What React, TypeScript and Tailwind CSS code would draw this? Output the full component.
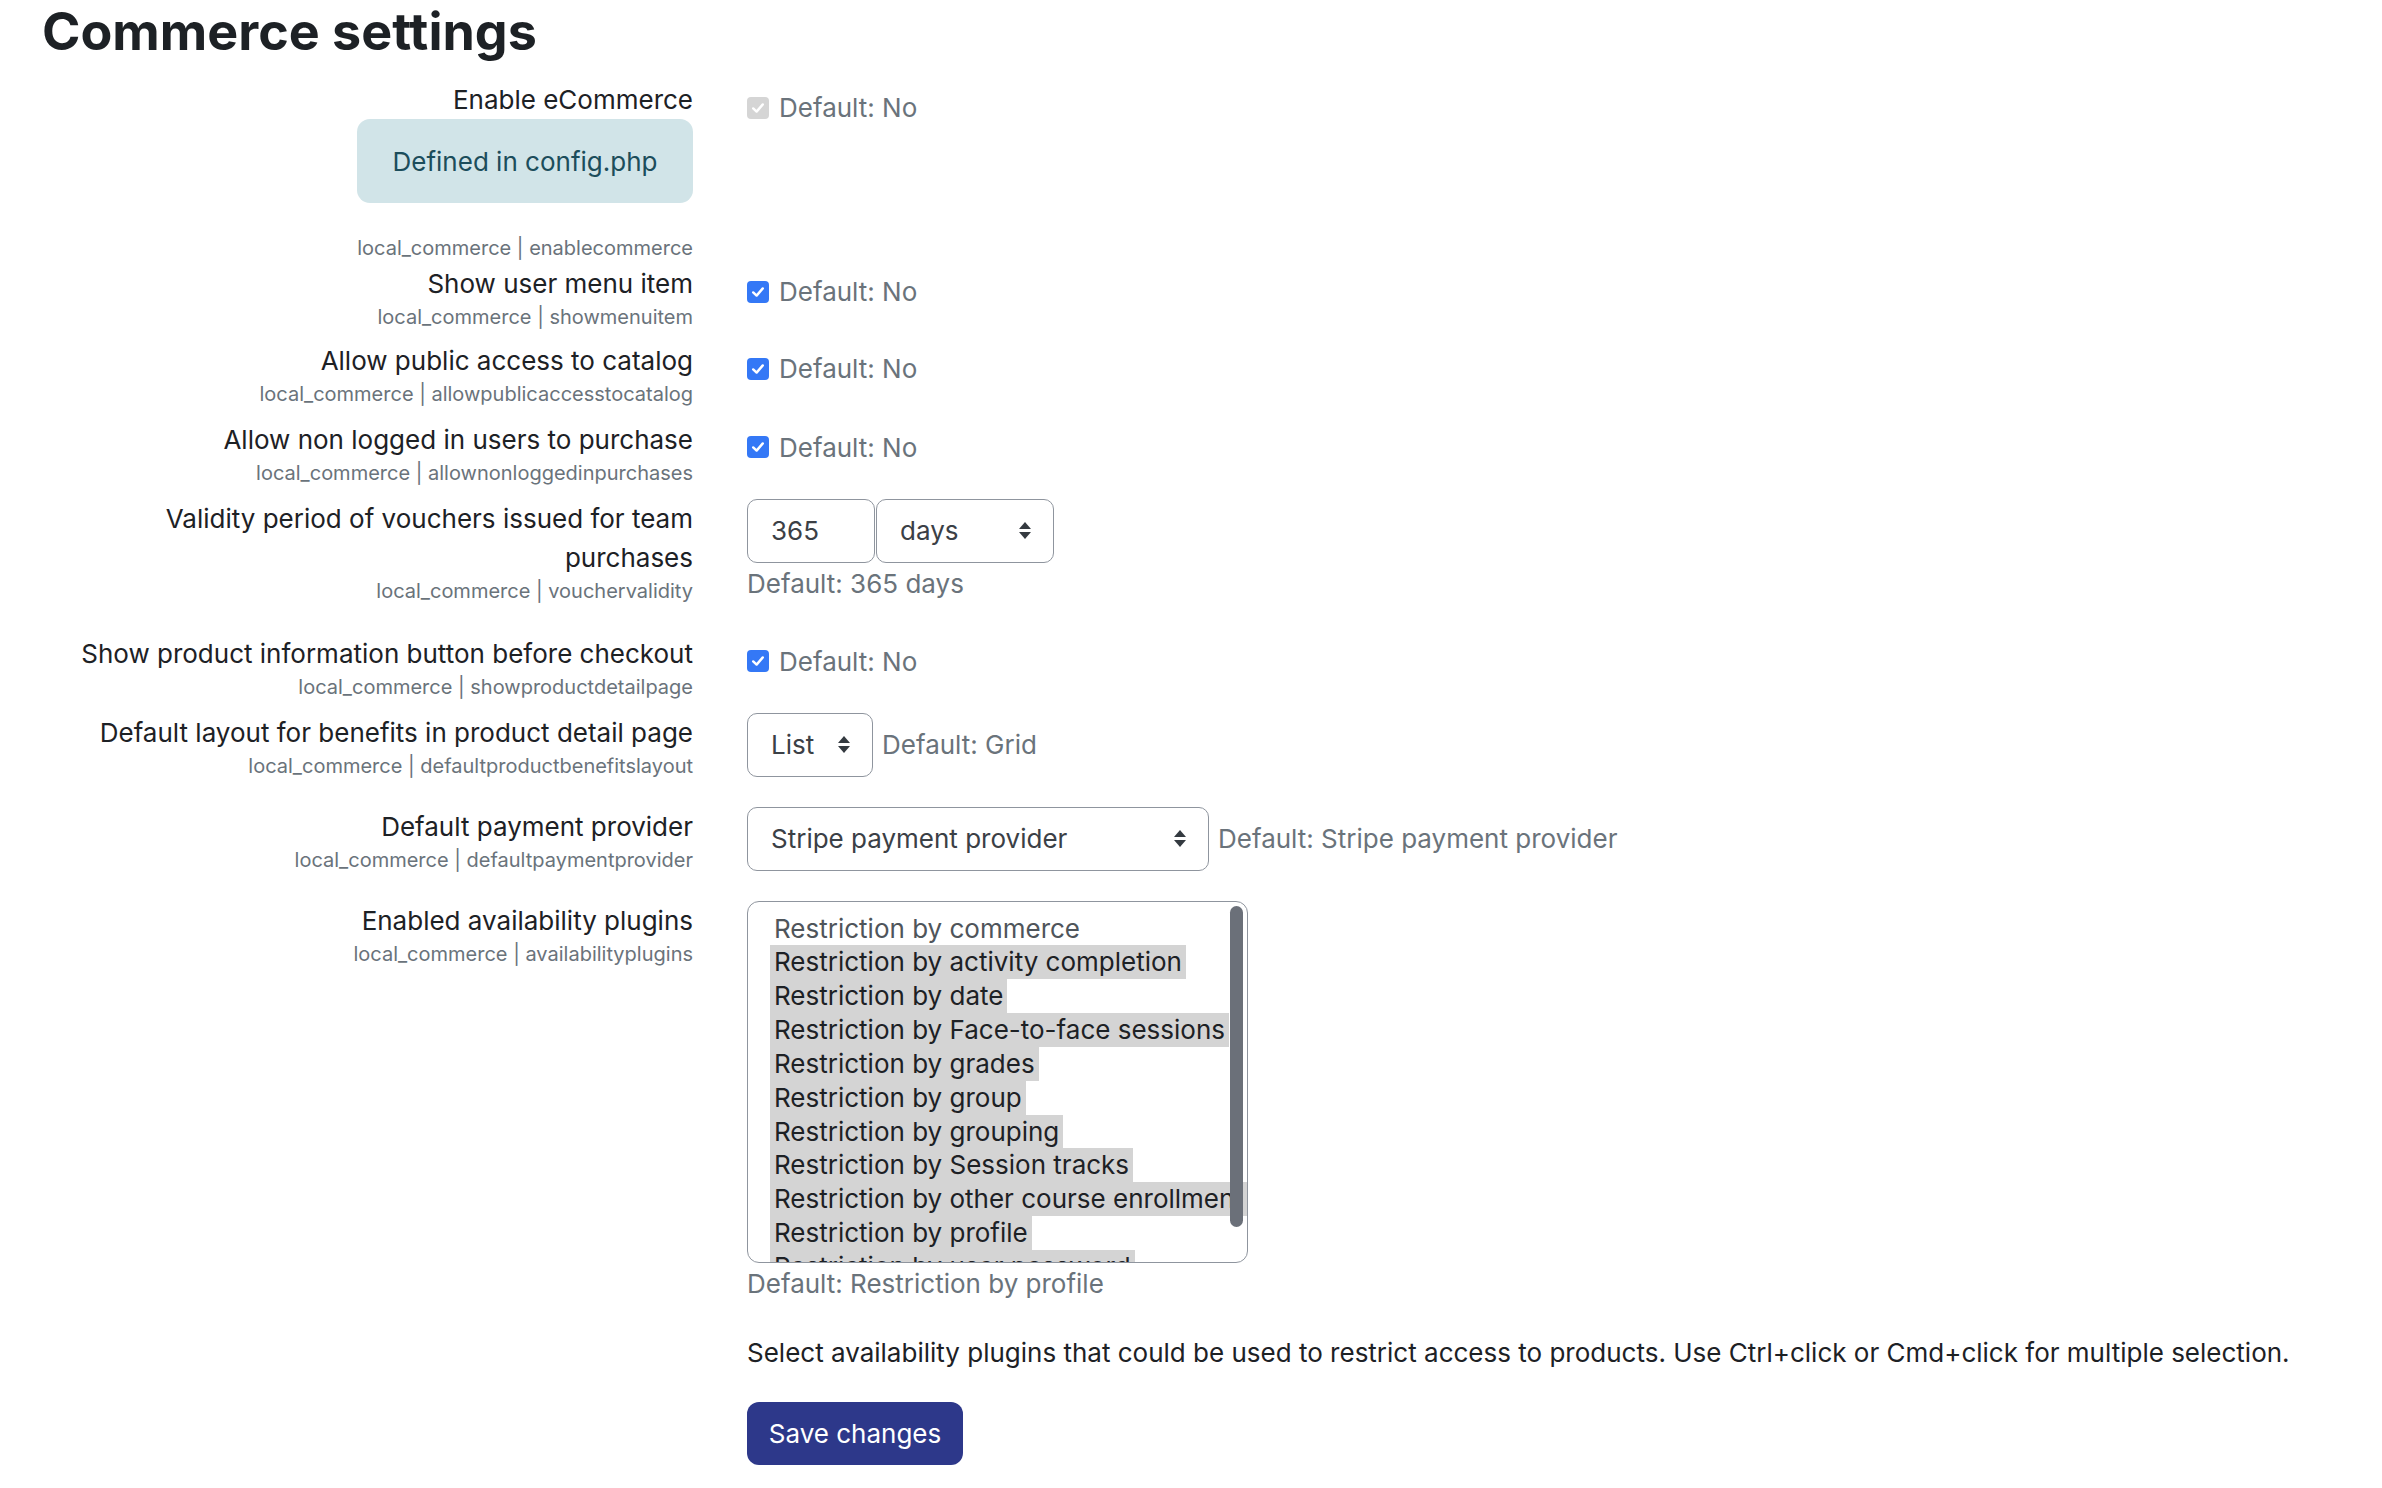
import type { ReactNode } from "react";

const OPTIONS = [
  { label: "Restriction by commerce", selected: false },
  { label: "Restriction by activity completion", selected: true },
  { label: "Restriction by date", selected: true },
  { label: "Restriction by Face-to-face sessions", selected: true },
  { label: "Restriction by grades", selected: true },
  { label: "Restriction by group", selected: true },
  { label: "Restriction by grouping", selected: true },
  { label: "Restriction by Session tracks", selected: true },
  { label: "Restriction by other course enrollment", selected: true },
  { label: "Restriction by profile", selected: true },
  { label: "Restriction by user password", selected: true },
];

function Checkbox({ disabled }: { disabled?: boolean }) {
  return (
    <span
      className={
        "flex h-[22px] w-[22px] items-center justify-center rounded-[4px] " +
        (disabled ? "bg-[#d5d5d5]" : "bg-[#3478f6]")
      }
    >
      <svg width="16" height="16" viewBox="0 0 16 16" fill="none">
        <path
          d="M3.2 8.4 L6.6 11.6 L12.8 4.4"
          stroke="white"
          strokeWidth="2.4"
          strokeLinecap="round"
          strokeLinejoin="round"
        />
      </svg>
    </span>
  );
}

function Arrows() {
  return (
    <svg width="12" height="17" viewBox="0 0 12 17" className="shrink-0">
      <path d="M0 7 L6 0 L12 7 Z" fill="#343a40" />
      <path d="M0 10 L6 17 L12 10 Z" fill="#343a40" />
    </svg>
  );
}

function Select({ value, width }: { value: string; width: string }) {
  return (
    <div
      className={
        "flex h-[64px] items-center justify-between rounded-[10px] border border-[#8f959e] bg-white pl-[23px] pr-[22px] text-[#3b4046] " +
        width
      }
    >
      <span>{value}</span>
      <Arrows />
    </div>
  );
}

function CheckDefault({ disabled }: { disabled?: boolean }) {
  return (
    <div className="box-content flex h-[39px] items-center pt-[8px]">
      <Checkbox disabled={disabled} />
      <span className="ml-[10px] text-[#6a737b]">Default: No</span>
    </div>
  );
}

function Row({
  label,
  name,
  children,
  extra,
  mb,
}: {
  label: ReactNode;
  name: string;
  children: ReactNode;
  extra?: ReactNode;
  mb: string;
}) {
  return (
    <div className={"flex items-start " + mb}>
      <div className="flex w-[693px] shrink-0 flex-col items-end text-right">
        <div className="leading-[39px]">{label}</div>
        {extra}
        <div className="text-[20px] leading-[28px] text-[#6a737b]">
          local_commerce | {name}
        </div>
      </div>
      <div className="ml-[54px] flex flex-col items-start">{children}</div>
    </div>
  );
}

export default function App() {
  return (
    <div className="min-h-screen bg-white font-['Inter',sans-serif] text-[26px] text-[#1d2125]">
      <h2 className="pl-[42px] pt-[2px] text-[52px] font-bold leading-[60px]">
        Commerce settings
      </h2>

      <div className="mt-[18px] flex flex-col">
        <Row
          label="Enable eCommerce"
          name="enablecommerce"
          mb="mb-[2.5px]"
          extra={
            <div className="mb-[30.5px] flex h-[84px] w-[336px] items-center justify-center rounded-[13px] bg-[#d1e4e8] text-[26px] text-[#1c4d5b]">
              Defined in config.php
            </div>
          }
        >
          <CheckDefault disabled />
        </Row>

        <Row label="Show user menu item" name="showmenuitem" mb="mb-[10px]">
          <CheckDefault />
        </Row>

        <Row
          label="Allow public access to catalog"
          name="allowpublicaccesstocatalog"
          mb="mb-[11.5px]"
        >
          <CheckDefault />
        </Row>

        <Row
          label="Allow non logged in users to purchase"
          name="allownonloggedinpurchases"
          mb="mb-[12px]"
        >
          <CheckDefault />
        </Row>

        <Row
          label={
            <>
              Validity period of vouchers issued for team
              <br />
              purchases
            </>
          }
          name="vouchervalidity"
          mb="mb-[29px]"
        >
          <div className="flex">
            <div className="flex h-[64px] w-[128px] items-center rounded-[10px] border border-[#8f959e] pl-[23px] text-[#3b4046]">
              365
            </div>
            <Select value="days" width="w-[178px] ml-[1px]" />
          </div>
          <div className="mt-[1px] leading-[39px] text-[#6a737b]">Default: 365 days</div>
        </Row>

        <Row
          label="Show product information button before checkout"
          name="showproductdetailpage"
          mb="mb-[12px]"
        >
          <CheckDefault />
        </Row>

        <Row
          label="Default layout for benefits in product detail page"
          name="defaultproductbenefitslayout"
          mb="mb-[27px]"
        >
          <div className="flex items-center">
            <Select value="List" width="w-[126px]" />
            <span className="ml-[9px] text-[#6a737b]">Default: Grid</span>
          </div>
        </Row>

        <Row label="Default payment provider" name="defaultpaymentprovider" mb="mb-[27px]">
          <div className="flex items-center">
            <Select value="Stripe payment provider" width="w-[462px]" />
            <span className="ml-[9px] text-[#6a737b]">Default: Stripe payment provider</span>
          </div>
        </Row>

        <Row label="Enabled availability plugins" name="availabilityplugins" mb="mb-[24px]">
          <div className="relative h-[362px] w-[501px] overflow-hidden rounded-[12px] border border-[#8f959e] bg-white pl-[22px] pt-[10px]">
            {OPTIONS.map((o) => (
              <div key={o.label} className="whitespace-nowrap leading-[33.85px]">
                <span
                  className={
                    "inline-block px-[4px] " +
                    (o.selected ? "bg-[#d4d4d4] text-[#1d2125]" : "text-[#4f555b]")
                  }
                >
                  {o.label}
                </span>
              </div>
            ))}
            <div className="absolute right-[4px] top-[4px] h-[321px] w-[13px] rounded-full bg-[#6b7079]" />
          </div>
          <div className="mt-[1px] leading-[39px] text-[#6a737b]">Default: Restriction by profile</div>
          <p className="mt-[30px] whitespace-nowrap leading-[39px]">
            Select availability plugins that could be used to restrict access to products. Use
            Ctrl+click or Cmd+click for multiple selection.
          </p>
          <button className="mt-[30px] h-[63px] w-[216px] rounded-[12px] bg-[#2d388a] text-white">
            Save changes
          </button>
        </Row>
      </div>
    </div>
  );
}
